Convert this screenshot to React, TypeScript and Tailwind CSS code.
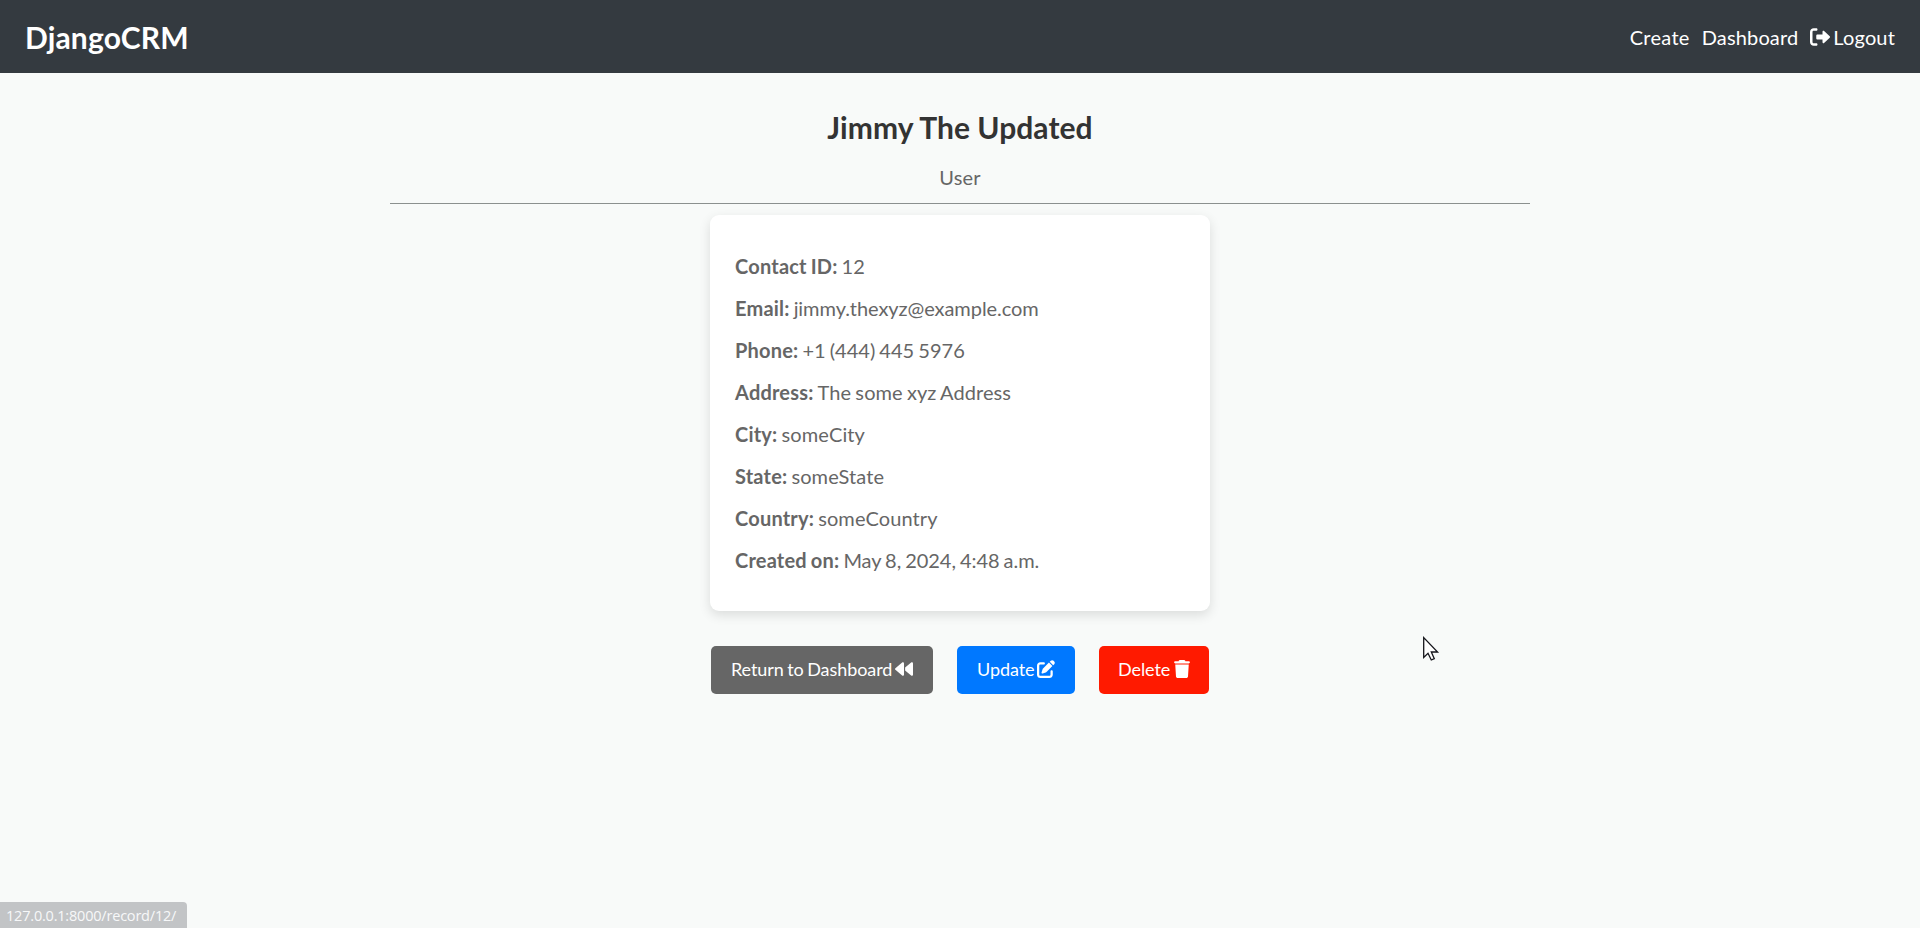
import { FaBackward, FaPenToSquare, FaTrash } from "react-icons/fa6";

const fields = [
  { label: "Contact ID:", value: "12", spacing: "tracking-[0.05px]" },
  { label: "Email:", value: "jimmy.thexyz@example.com", spacing: "tracking-[-0.06px]" },
  { label: "Phone:", value: "+1 (444) 445 5976", spacing: "tracking-[0.02px]" },
  { label: "Address:", value: "The some xyz Address", spacing: "tracking-[0.1px]" },
  { label: "City:", value: "someCity", spacing: "tracking-[0.12px]" },
  { label: "State:", value: "someState", spacing: "tracking-[0.1px]" },
  { label: "Country:", value: "someCountry", spacing: "tracking-[0.1px]" },
  { label: "Created on:", value: "May 8, 2024, 4:48 a.m.", spacing: "tracking-[-0.03px]" },
];

function LogoutIcon() {
  return (
    <svg className="size-[20px]" viewBox="0 0 512 512" fill="currentColor">
      <path d="M96 480h64c17.67 0 32-14.33 32-32s-14.33-32-32-32H96c-17.67 0-32-14.33-32-32V128c0-17.67 14.33-32 32-32h64c17.67 0 32-14.33 32-32s-14.33-32-32-32H96C42.98 32 0 74.98 0 128v256C0 437 42.98 480 96 480zM504.8 238.5l-144.1-136c-6.975-6.578-17.2-8.375-26-4.594c-8.803 3.797-14.51 12.47-14.51 22.05l-.09 72h-128c-17.69 0-32.02 14.33-32.02 32v64c0 17.67 14.34 32 32.02 32h128l.09 72c0 9.578 5.707 18.25 14.51 22.05c8.803 3.781 19.03 1.984 26-4.594l144.1-136C514.4 264.4 514.4 247.6 504.8 238.5z" />
    </svg>
  );
}

function Header() {
  return (
    <header className="flex h-[73px] w-full items-center justify-between bg-[#343a40] px-[25px] text-white">
      <h1 className="pt-[2px] text-[30px] font-bold tracking-[0.15px]">DjangoCRM</h1>
      <nav className="flex items-center gap-[12px] pt-px tracking-[0.15px]">
        <a className="tracking-[0.3px]">Create</a>
        <a>Dashboard</a>
        <a className="flex items-center gap-[3px]">
          <LogoutIcon />
          Logout
        </a>
      </nav>
    </header>
  );
}

function Cursor() {
  return (
    <svg className="absolute top-[635px] left-[1422px]" width="18" height="27" viewBox="0 0 18 27">
      <path d="M1.7 2.5V22.5L6 18.3L9.3 25L12.3 23.7L9.3 17H15.6Z" fill="#fff" stroke="#15151b" strokeWidth="1.3" />
    </svg>
  );
}

export default function App() {
  return (
    <div className="relative flex h-[928px] flex-col items-center overflow-hidden bg-[#f8faf9] font-['Lato',sans-serif] text-[20px] text-[#666]">
      <Header />
      <h2 className="mt-[32px] text-[30px] leading-[45px] font-bold tracking-[0.05px] text-[#333]">Jimmy The Updated</h2>
      <p className="mt-[12px] leading-[30px] tracking-[0.2px]">User</p>
      <hr className="mt-[11px] w-[1140px] border-[#8b908f]" />
      <section className="mt-[11px] h-[396px] w-[500px] rounded-[9px] bg-white px-[25px] pt-[30px] shadow-[0_4px_12px_rgba(0,0,0,0.12)]">
        {fields.map(({ label, value, spacing }) => (
          <p key={label} className="h-[42px] leading-[42px] [word-spacing:-1.1px]">
            <strong className="tracking-[0.2px]">{label}</strong> <span className={spacing}>{value}</span>
          </p>
        ))}
      </section>
      <div className="mt-[35px] flex gap-[24px] text-[18px] leading-[46px] tracking-[-0.08px] text-white [word-spacing:-1px]">
        <a className="flex h-[48px] w-[222px] gap-[3px] rounded-[5px] bg-[#666] pl-[20px]">
          Return to Dashboard
          <FaBackward className="mt-[14px]" />
        </a>
        <a className="flex h-[48px] w-[118px] gap-[3px] rounded-[5px] bg-[#0078ff] pl-[20px]">
          Update
          <FaPenToSquare className="mt-[14px]" />
        </a>
        <a className="flex h-[48px] w-[110px] gap-[3px] rounded-[5px] bg-[#ff1a00] pl-[19px]">
          Delete
          <FaTrash className="mt-[14px]" />
        </a>
      </div>
      <div className="absolute bottom-0 left-0 h-[26px] w-[187px] rounded-tr-[4px] bg-[#c2c4c6] pl-[6px] font-['Open_Sans',sans-serif] text-[14.5px] leading-[27px] tracking-[-0.2px] text-[#f7f8f9]">
        127.0.0.1:8000/record/12/
      </div>
      <Cursor />
    </div>
  );
}
